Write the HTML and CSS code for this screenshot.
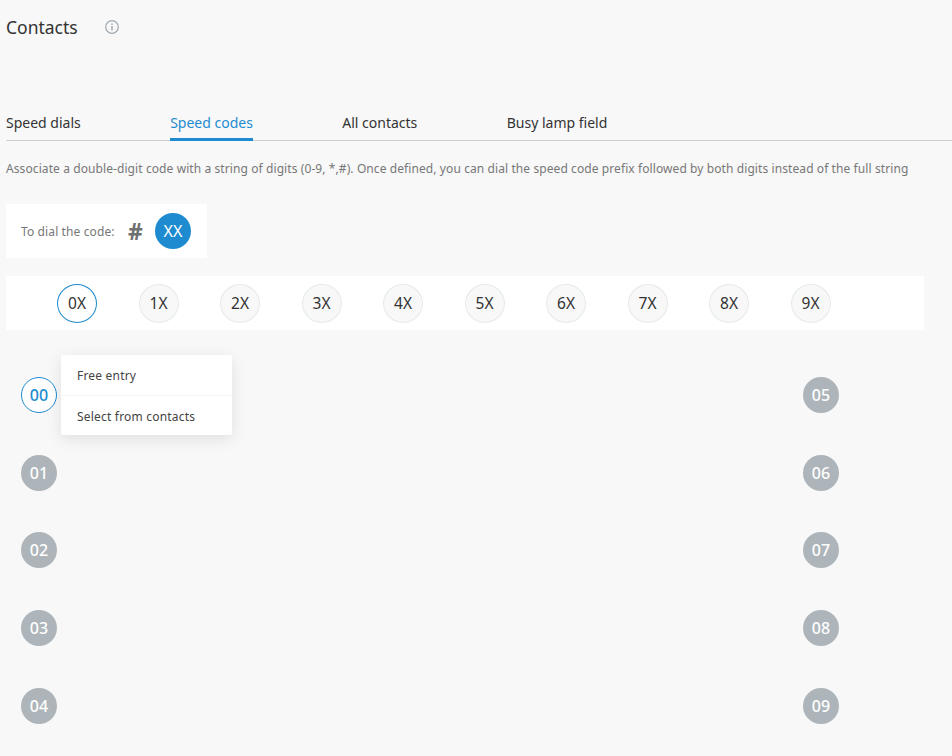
FILE: index.html
```html
<!DOCTYPE html>
<html lang="en">
<head>
<meta charset="utf-8">
<title>Contacts</title>
<link rel="stylesheet" href="styles.css">
</head>
<body>
<main class="page">
  <header class="head">
    <h1 class="title">Contacts</h1>
    <svg class="info" viewBox="0 0 14 14" width="14" height="14" aria-hidden="true">
      <circle cx="7" cy="7" r="6.3" fill="none" stroke="#9fa9b0" stroke-width="1.2"/>
      <rect x="6.3" y="6" width="1.4" height="4.4" fill="#9fa9b0"/>
      <rect x="6.3" y="3.5" width="1.4" height="1.5" fill="#9fa9b0"/>
    </svg>
  </header>
  <nav class="tabs">
    <a class="tab">Speed dials</a>
    <a class="tab tab-active">Speed codes</a>
    <a class="tab">All contacts</a>
    <a class="tab">Busy lamp field</a>
  </nav>
  <p class="desc">Associate a double-digit code with a string of digits (0-9, *,#). Once defined, you can dial the speed code prefix followed by both digits instead of the full string</p>
  <section class="dial">
    <span class="dial-label">To dial the code:</span>
    <span class="hash">#</span>
    <span class="xx">XX</span>
  </section>
  <section class="prefixes">
    <div class="cell"><span class="prefix prefix-active">0X</span></div>
    <div class="cell"><span class="prefix">1X</span></div>
    <div class="cell"><span class="prefix">2X</span></div>
    <div class="cell"><span class="prefix">3X</span></div>
    <div class="cell"><span class="prefix">4X</span></div>
    <div class="cell"><span class="prefix">5X</span></div>
    <div class="cell"><span class="prefix">6X</span></div>
    <div class="cell"><span class="prefix">7X</span></div>
    <div class="cell"><span class="prefix">8X</span></div>
    <div class="cell"><span class="prefix">9X</span></div>
  </section>
  <section class="slots">
    <div class="slot slot-active">
      <span class="code code-active">00</span>
      <div class="menu">
        <div class="menu-item">Free entry</div>
        <div class="menu-item">Select from contacts</div>
      </div>
    </div>
    <div class="slot"><span class="code">05</span></div>
    <div class="slot"><span class="code">01</span></div>
    <div class="slot"><span class="code">06</span></div>
    <div class="slot"><span class="code">02</span></div>
    <div class="slot"><span class="code">07</span></div>
    <div class="slot"><span class="code">03</span></div>
    <div class="slot"><span class="code">08</span></div>
    <div class="slot"><span class="code">04</span></div>
    <div class="slot"><span class="code">09</span></div>
  </section>
</main>
</body>
</html>
```
FILE: styles.css
```css
* { box-sizing: border-box; }
html, body { margin: 0; padding: 0; }
body {
  background: #f8f8f8;
  font-family: "Noto Sans", "Open Sans", sans-serif;
  color: #333;
  height: 756px;
  overflow: hidden;
}
.page { padding: 0 0 0 6px; }
.head { display: flex; align-items: center; height: 54px; }
.title { margin: 0; font-size: 17.5px; font-weight: 400; line-height: 54px; width: 99px; color: #333; }
.info { display: block; margin-top: 0; }
.tabs {
  display: flex;
  gap: 89.4px;
  margin-top: 47px;
  height: 40px;
  border-bottom: 1px solid #cfcfcf;
}
.tab { font-size: 14px; line-height: 44px; height: 40px; color: #333; white-space: nowrap; }
.tab-active { color: #1e8bd0; border-bottom: 3px solid #1e8bd0; }
.desc { margin: 19px 0 0; font-size: 12px; letter-spacing: 0.09px; line-height: 18px; color: #777; white-space: nowrap; }
.dial {
  display: flex;
  align-items: center;
  width: 201px;
  height: 54px;
  margin-top: 26px;
  padding-left: 15px;
  background: #fff;
}
.dial-label { font-size: 12px; letter-spacing: 0.12px; color: #777; width: 107px; white-space: nowrap; }
.hash { font-size: 23px; font-weight: 700; color: #707070; width: 27px; line-height: 1; }
.xx {
  display: flex; align-items: center; justify-content: center;
  width: 36px; height: 36px; border-radius: 50%;
  background: #1e8bd0; color: #fff; font-size: 16px;
}
.prefixes {
  display: flex;
  width: 918px;
  height: 54px;
  margin-top: 18px;
  padding-left: 30.25px;
  background: #fff;
  align-items: center;
}
.cell { width: 81.5px; display: flex; justify-content: center; }
.prefix {
  display: flex; align-items: center; justify-content: center;
  width: 40px; height: 39px; border-radius: 50%;
  background: #f8f8f8; border: 1px solid #e4eaee;
  font-size: 15.5px; color: #333;
}
.prefix-active { background: #fff; border-color: #1e8bd0; }
.slots {
  display: grid;
  grid-template-columns: 782px 100px;
  grid-auto-rows: 77.6px;
  margin-top: 26.4px;
  padding-left: 15px;
}
.slot { position: relative; display: flex; align-items: center; height: 77.6px; }
.code {
  display: flex; align-items: center; justify-content: center;
  width: 36px; height: 36px; border-radius: 50%;
  background: #adb5ba; color: #fff; font-size: 16px; font-weight: 500;
}
.code-active { background: #fff; border: 1px solid #1e8bd0; color: #1e8bd0; }
.menu {
  position: absolute;
  left: 40px;
  top: -1.4px;
  width: 171px;
  background: #fff;
  border-radius: 2px;
  box-shadow: 0 4px 16px rgba(0, 0, 0, 0.1);
  z-index: 2;
}
.menu-item { height: 40px; padding-left: 16px; font-size: 12px; letter-spacing: 0.2px; line-height: 41px; color: #444; }
.menu-item + .menu-item { border-top: 1px solid #f3f3f3; }
```
